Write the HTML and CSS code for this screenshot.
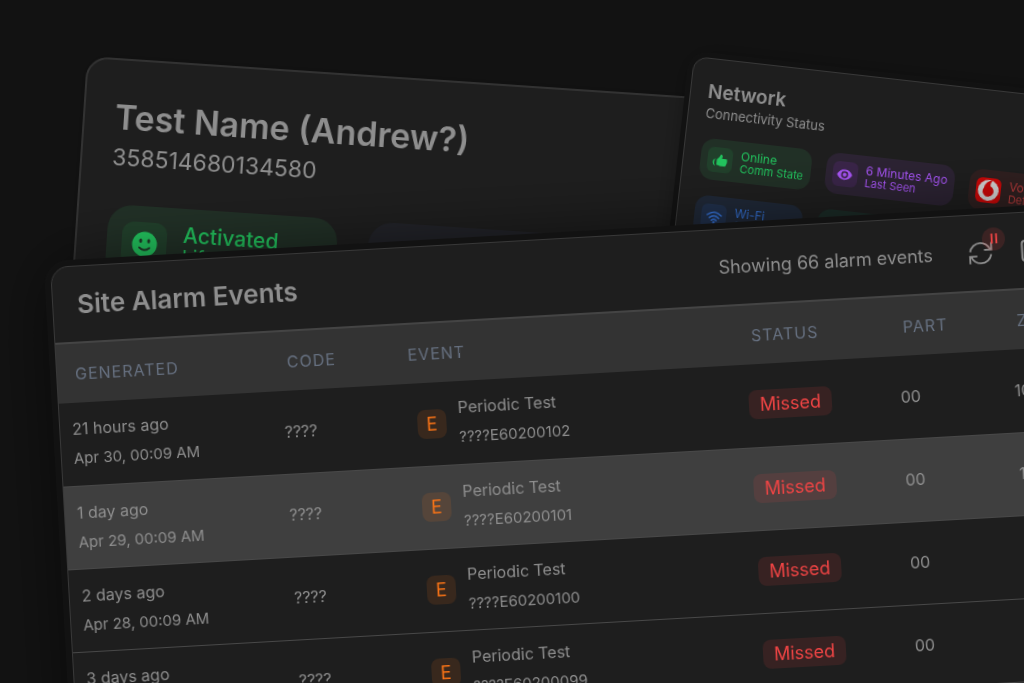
FILE: index.html
```
<!DOCTYPE html>
<html lang="en">
<head>
<meta charset="utf-8">
<meta name="viewport" content="width=device-width, initial-scale=1">
<title>Site Alarm Events</title>
<link rel="stylesheet" href="styles.css">
</head>
<body>
<main class="stage">
  <section class="card device">
    <h2 class="device-name">Test Name (Andrew?)</h2>
    <p class="device-id">358514680134580</p>
    <div class="pills">
      <div class="pill green">
        <span class="pill-icon"><svg viewBox="0 0 24 24"><circle cx="12" cy="12" r="11.5" fill="currentColor"/><ellipse cx="8.3" cy="9" rx="1.4" ry="2" fill="#1e3a28"/><ellipse cx="15.7" cy="9" rx="1.4" ry="2" fill="#1e3a28"/><path d="M7.3 15.2q4.7 4.2 9.4 0" fill="none" stroke="#1e3a28" stroke-width="1.7" stroke-linecap="round"/></svg></span>
        <span class="pill-text"><b>Activated</b><small>Lifecycle</small></span>
      </div>
      <div class="pill slate"></div>
    </div>
  </section>

  <section class="card network">
    <h2 class="network-title">Network</h2>
    <p class="network-sub">Connectivity Status</p>
    <div class="pills">
      <div class="pill green">
        <span class="pill-icon"><svg viewBox="0 0 24 24" fill="currentColor"><path d="M6.500 10.500c2.300-1.500 3.900-3.800 4.700-6.300.5-1.900 3.600-1.500 3.600 1.300 0 1.300-.4 2.500-.8 3.500h6.200c1.700 0 2.500 1.900 1.500 3 .9.900.8 2.200-.1 2.900.4 1.100 0 2.100-.9 2.600.2 1.700-.8 2.900-2.600 2.900h-4.300c-2.700 0-4.300-1.400-7.300-1.600z"/><path d="M4.300 9.500c-4.600 2.500-4.600 8 0 11-1.800-3.500-1.800-7.500 0-11z"/></svg></span>
        <span class="pill-text"><b>Online</b><small>Comm State</small></span>
      </div>
      <div class="pill purple">
        <span class="pill-icon"><svg viewBox="0 0 24 24"><path d="M.5 12C5.500 1.600 18.500 1.600 23.500 12 18.500 22.400 5.500 22.400.5 12z" fill="currentColor"/><circle cx="12" cy="12" r="5.200" fill="#34213f"/><circle cx="12" cy="12" r="3" fill="currentColor"/></svg></span>
        <span class="pill-text"><b>6 Minutes Ago</b><small>Last Seen</small></span>
      </div>
      <div class="pill red">
        <span class="pill-icon brand"><svg viewBox="0 0 24 24"><circle cx="12" cy="12" r="10" fill="#d8d8d8"/><path d="M15.500 2.200C11.500 2.700 8.300 5.300 7.700 9.500a5.300 5.300 0 1 0 6-1.700c-.3-2.300.4-4.200 1.800-5.600z" fill="#d00707"/></svg></span>
        <span class="pill-text"><b>Vodafone</b><small>Default SIM</small></span>
      </div>
    </div>
    <div class="pills">
      <div class="pill blue">
        <span class="pill-icon"><svg viewBox="0 0 24 24" fill="none" stroke="currentColor" stroke-width="2.400" stroke-linecap="round"><path d="M1.500 9q10.500-9 21 0M5 13q7-6 14 0M8.500 16.800q3.500-3 7 0"/><circle cx="12" cy="20" r=".8"/></svg></span>
        <span class="pill-text"><b>Wi-Fi</b><small>Connection</small></span>
      </div>
      <div class="pill teal"></div>
    </div>
  </section>

  <section class="card alarms">
    <header class="alarms-head">
      <h1 class="alarms-title">Site Alarm Events</h1>
      <span class="alarms-count">Showing 66 alarm events</span>
      <button class="icon-btn" type="button" aria-label="Refresh">
        <svg viewBox="0 0 24 24" fill="none" stroke="currentColor" stroke-width="1.800"><path d="M1.500 10.500C2.500 5.300 6.800 1.800 12 1.800c4.300 0 7.500 2.300 9.600 6.500M22.500 13.500c-1 5.200-5.300 8.700-10.500 8.700-4.300 0-7.500-2.300-9.600-6.500"/><path d="M22.800 1.500v7.300h-7.300M1.200 22.500v-7.300h7.300"/></svg>
        <span class="pause"><svg viewBox="0 0 10 10"><path d="M2.700 0v10M7.300 0v10" stroke="currentColor" stroke-width="1.800"/></svg></span>
      </button>
      <button class="icon-btn" type="button" aria-label="Layout">
        <svg viewBox="0 0 24 24" fill="none" stroke="currentColor" stroke-width="2"><rect x="1.500" y="2" width="21" height="20" rx="3"/></svg>
      </button>
    </header>
    <table class="events">
      <colgroup><col class="c-time"><col class="c-code"><col class="c-event"><col class="c-status"><col class="c-part"><col></colgroup>
      <thead><tr><th>GENERATED</th><th>CODE</th><th>EVENT</th><th>STATUS</th><th>PART</th><th>ZONE</th></tr></thead>
      <tbody>
        <tr>
          <td><span class="main">21 hours ago</span><span class="sub">Apr 30, 00:09 AM</span></td><td>????</td>
          <td><div class="event"><span class="tag">E</span><div><span class="main">Periodic Test</span><span class="sub">????E60200102</span></div></div></td>
          <td><span class="status">Missed</span></td><td>00</td><td>10</td>
        </tr>
        <tr class="active">
          <td><span class="main">1 day ago</span><span class="sub">Apr 29, 00:09 AM</span></td><td>????</td>
          <td><div class="event"><span class="tag">E</span><div><span class="main">Periodic Test</span><span class="sub">????E60200101</span></div></div></td>
          <td><span class="status">Missed</span></td><td>00</td><td>10</td>
        </tr>
        <tr>
          <td><span class="main">2 days ago</span><span class="sub">Apr 28, 00:09 AM</span></td><td>????</td>
          <td><div class="event"><span class="tag">E</span><div><span class="main">Periodic Test</span><span class="sub">????E60200100</span></div></div></td>
          <td><span class="status">Missed</span></td><td>00</td><td></td>
        </tr>
        <tr>
          <td><span class="main">3 days ago</span><span class="sub">Apr 27, 00:09 AM</span></td><td>????</td>
          <td><div class="event"><span class="tag">E</span><div><span class="main">Periodic Test</span><span class="sub">????E60200099</span></div></div></td>
          <td><span class="status">Missed</span></td><td>00</td><td></td>
        </tr>
      </tbody>
    </table>
  </section>
</main>
</body>
</html>
```
FILE: styles.css
```
* { box-sizing: border-box; }
body {
  margin: 0;
  background: #121212;
  color: #8e8e8e;
  font-family: Inter, "Liberation Sans", sans-serif;
}
h1, h2, p { margin: 0; }
svg { display: block; }

.stage {
  position: relative;
  min-height: 100vh;
  overflow: hidden;
}

/* Tilted cards stacked over one another */
.card {
  position: absolute;
  background: #1e1e1e;
  border: 1px solid #383838;
  transform-origin: 0 0;
  will-change: transform;
}
.device {
  left: 87px;
  top: 56px;
  width: 70%;
  padding: 35px 30px 60px;
  border-width: 2px;
  border-color: #323232;
  border-radius: 22px;
  transform: rotate(3.85deg);
  box-shadow: 0 0 12px rgba(0, 0, 0, 0.2);
}
.network {
  left: 694px;
  top: 56px;
  width: 50%;
  padding: 21px 17px 60px;
  border-radius: 14px;
  transform: rotate(6.45deg);
  box-shadow: 0 0 0 5px #121212, 0 0 28px rgba(0, 0, 0, 0.4);
}
.alarms {
  left: 50px;
  top: 267px;
  width: 100%;
  min-height: 120%;
  border-radius: 18px;
  transform: rotate(-3.25deg);
  box-shadow: 0 0 0 6px #121212, 0 0 70px rgba(0, 0, 0, 0.6);
  overflow: hidden;
}

/* Pills */
.pills { display: flex; }
.pill { display: flex; align-items: center; flex: none; }
.pill-icon { display: grid; place-items: center; flex: none; }
.pill-text { display: flex; flex-direction: column; }
.pill-text b { font-weight: 400; }
.green { color: #22c55e; background: #213026; }
.green .pill-icon { background: #21402b; }
.purple { color: #a855f7; background: #2c2333; }
.purple .pill-icon { background: #3a2549; }
.red { color: #ba3b3b; background: #302020; }
.blue { color: #3572d6; background: #1f2837; }
.blue .pill-icon { background: #20304c; }
.slate { background: #222329; }
.teal { background: #1b2c27; }
.red .brand { background: #d00707; }

.device-name { font-size: 34px; line-height: 44px; font-weight: 600; }
.device-id { font-size: 23px; line-height: 36px; }
.device .pills { gap: 31px; margin-top: 29px; }
.device .pill {
  min-width: 230px;
  height: 76px;
  padding: 15px;
  gap: 16px;
  border-radius: 24px;
}
.device .pill-icon { width: 45px; height: 45px; border-radius: 12px; }
.device .pill-icon svg { width: 26px; height: 26px; }
.device .pill-text { font-size: 21px; line-height: 22px; }
.device .pill-text b { font-weight: 500; }
.device small { font-size: 19px; }

.network-title { font-size: 19px; line-height: 24px; font-weight: 600; }
.network-sub { font-size: 13px; line-height: 18px; }
.network .pills { gap: 15px; margin-top: 16px; }
.network .pill {
  min-width: 108px;
  height: 41px;
  padding: 7px;
  gap: 8px;
  border-radius: 13px;
}
.network .pill-icon { width: 25px; height: 25px; border-radius: 6px; }
.network .pill-icon svg { width: 16px; height: 16px; }
.network .brand svg { width: 25px; height: 25px; }
.network .pill-text { font-size: 12px; line-height: 12px; }
.network small { font-size: 11px; }

/* Alarm list */
.alarms-head {
  display: flex;
  align-items: center;
  height: 77px;
  padding: 0 29px 0 24px;
  border-bottom: 2px solid #444;
}
.alarms-title { flex: 1; font-size: 26px; line-height: 32px; font-weight: 600; }
.alarms-count { margin-right: 36px; font-size: 18px; }
.icon-btn {
  position: relative;
  width: 24px;
  height: 24px;
  padding: 0;
  border: 0;
  background: none;
  color: inherit;
}
.icon-btn + .icon-btn { margin-left: 28px; }
.pause {
  position: absolute;
  top: -13px;
  right: -13px;
  display: grid;
  place-items: center;
  width: 23px;
  height: 23px;
  border-radius: 50%;
  background: rgba(239, 68, 68, 0.14);
  color: #ef4444;
}
.pause svg { width: 10px; height: 10px; }

.events { width: 100%; table-layout: fixed; border-collapse: collapse; }
.c-time { width: 212px; }
.c-code { width: 121px; }
.c-event { width: 344px; }
.c-status { width: 152px; }
.c-part { width: 114px; }
.events th {
  height: 59px;
  padding: 0 18px;
  background: #333;
  color: #667080;
  font-size: 16px;
  font-weight: 400;
  letter-spacing: 1px;
  text-align: left;
}
.events td {
  height: 83px;
  padding: 0 12px;
  border-bottom: 1px solid #484848;
  font-size: 16px;
  line-height: 29px;
}
.active { background: #3f3f3f; }
.main, .sub { display: block; }
.sub { font-size: 15px; }
.event { display: flex; align-items: center; gap: 12px; padding-left: 12px; }
.tag {
  display: grid;
  place-items: center;
  width: 29px;
  height: 29px;
  border-radius: 8px;
  background: rgba(249, 115, 22, 0.12);
  color: #f97316;
  font-size: 18px;
}
.status {
  display: inline-block;
  padding: 0 11px;
  border-radius: 8px;
  background: rgba(239, 68, 68, 0.12);
  color: #ef4444;
  font-size: 18px;
}
```
